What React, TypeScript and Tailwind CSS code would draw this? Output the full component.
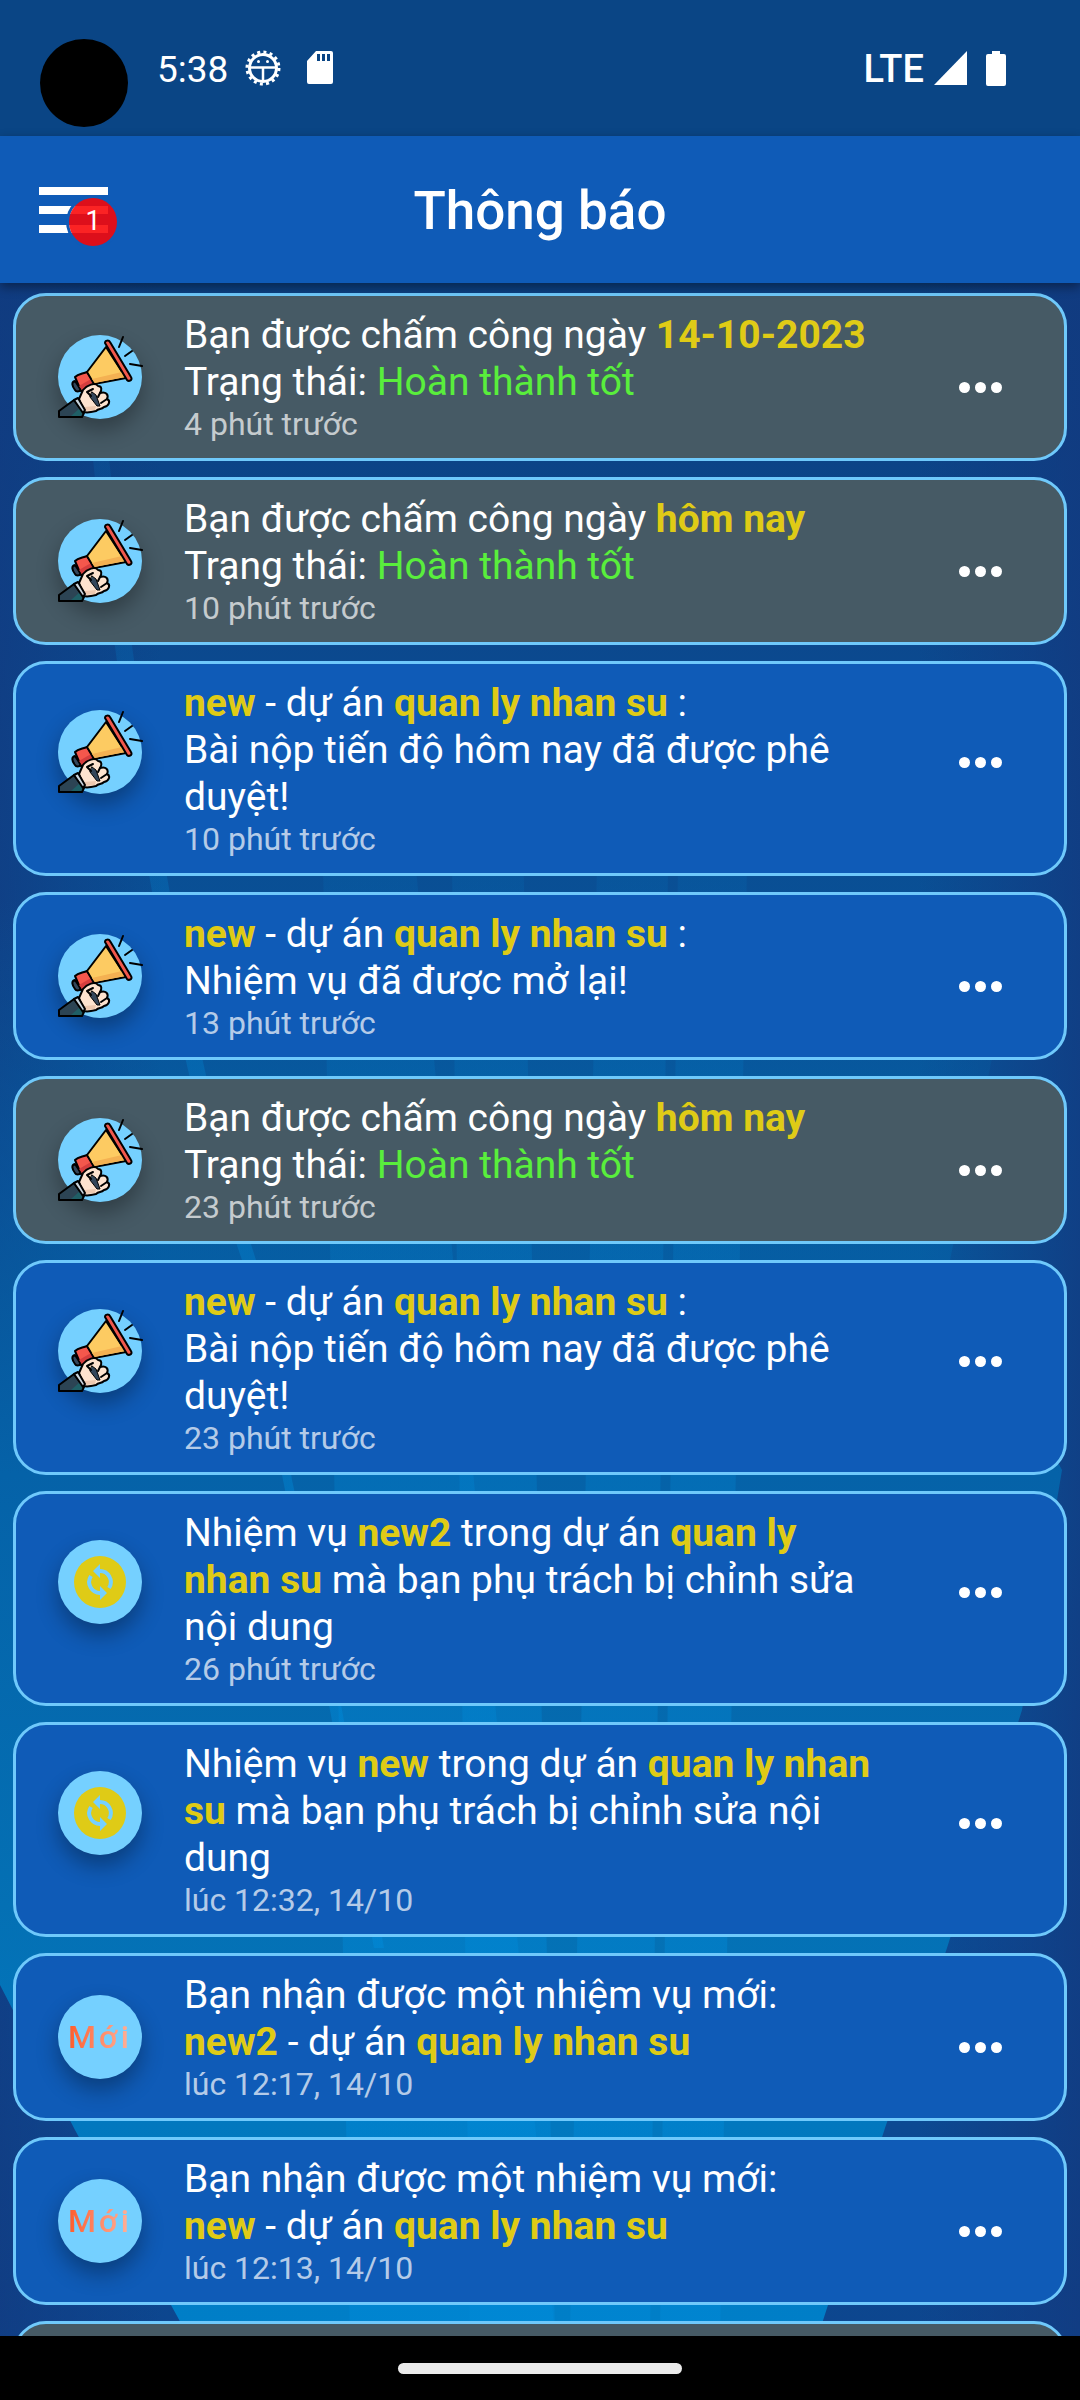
import React from "react";

const Y = ({ children }: { children: React.ReactNode }) => (
  <strong className="font-bold text-[#dfcb16]">{children}</strong>
);

type Kind = "horn" | "sync" | "new";
type Item = { kind: Kind; read?: boolean; tall?: boolean; body: React.ReactNode; time: string };

const attendance = (day: string) => (
  <>
    Bạn được chấm công ngày <Y>{day}</Y>
    <br />
    Trạng thái: <span className="text-[#59ee3c]">Hoàn thành tốt</span>
  </>
);
const project = (text: string) => (
  <>
    <Y>new</Y> - dự án <Y>quan ly nhan su</Y> :<br />
    {text}
  </>
);
const edited = (task: string) => (
  <>
    Nhiệm vụ <Y>{task}</Y> trong dự án <Y>quan ly nhan su</Y> mà bạn phụ trách bị chỉnh sửa nội dung
  </>
);
const received = (task: string) => (
  <>
    Bạn nhận được một nhiệm vụ mới:
    <br />
    <Y>{task}</Y> - dự án <Y>quan ly nhan su</Y>
  </>
);

const items: Item[] = [
  { kind: "horn", read: true, body: attendance("14-10-2023"), time: "4 phút trước" },
  { kind: "horn", read: true, body: attendance("hôm nay"), time: "10 phút trước" },
  { kind: "horn", tall: true, body: project("Bài nộp tiến độ hôm nay đã được phê duyệt!"), time: "10 phút trước" },
  { kind: "horn", body: project("Nhiệm vụ đã được mở lại!"), time: "13 phút trước" },
  { kind: "horn", read: true, body: attendance("hôm nay"), time: "23 phút trước" },
  { kind: "horn", tall: true, body: project("Bài nộp tiến độ hôm nay đã được phê duyệt!"), time: "23 phút trước" },
  { kind: "sync", tall: true, body: edited("new2"), time: "26 phút trước" },
  { kind: "sync", tall: true, body: edited("new"), time: "lúc 12:32, 14/10" },
  { kind: "new", body: received("new2"), time: "lúc 12:17, 14/10" },
  { kind: "new", body: received("new"), time: "lúc 12:13, 14/10" },
  { kind: "horn", read: true, body: attendance("hôm nay"), time: "lúc 11:50, 14/10" },
];

function Horn() {
  return (
    <svg viewBox="0 0 84 84" className="size-[84px] shrink-0 overflow-visible" aria-hidden="true">
      <g stroke="#000" strokeWidth="2" strokeLinejoin="round" strokeLinecap="round">
        <path d="M1 76 L16 65 L26 78 L24 82 L1 82 Z" fill="#2c4454" />
        <path d="M13 81 L22 73 L25 78 L23 81 Z" fill="#1f5f66" stroke="none" />
        <path d="M17 46 C13 47 14 51 17 55 C18 57 21 57 23 55 Z" fill="#33465a" />
        <path d="M17 42 C20 39 24 39 29 37 L37 49 C32 51 29 56 23 56 Z" fill="#f4574c" />
        <path d="M21 51 L33 44 L36 49 L24 55 Z" fill="#d53e3e" stroke="none" />
        <path d="M29 37 L48 12 L68 43 L36 49 Z" fill="#fdcb62" />
        <path d="M34 44 L64 37 L67 42 L37 48 Z" fill="#f4b152" stroke="none" />
        <path d="M47 8 C47 5 51 5 52 7 L73 42 C75 45 71 47 69 45 Z" fill="#f1584c" />
        <path d="M65 2 L61 12 M74 16 L67 21 M72 29 L84 31" fill="none" />
        <path d="M21 64 L25 55 C29 50 37 47 40 51 C44 51 44 55 42 58 C48 56 51 60 49 64 C53 66 51 71 46 72 C43 75 41 73 38 76 C34 77 29 78 26 77 Z" fill="#fde3cf" />
        <path d="M26 72 L38 71 L37 75 L27 76 Z" fill="#edc9b0" stroke="none" />
        <path d="M34 57 L38 60 L42 71 L39 71 L32 62 Z" fill="#33465a" strokeWidth="1" />
        <path d="M33 61 L29 57 L35 54 M40 62 L42 58 M43 68 L49 64" fill="none" />
        <path d="M16 65 L20 63 L27 75 L25 78 Z" fill="#c9d6df" />
      </g>
    </svg>
  );
}

function Sync() {
  return (
    <svg viewBox="0 0 52 52" className="size-[52px]" aria-hidden="true">
      <circle cx="26" cy="26" r="26" fill="#dfcb16" />
      <g fill="none" stroke="#75d0ff" strokeWidth="4">
        <path d="M25 15 A11 11 0 0 1 35 32" />
        <path d="M27 37 A11 11 0 0 1 17 20" />
      </g>
      <path d="M26 8 V22 L19 15 Z M26 44 V30 L33 37 Z" fill="#75d0ff" />
    </svg>
  );
}

function Avatar({ kind }: { kind: Kind }) {
  return (
    <div className="flex size-[84px] shrink-0 items-center justify-center rounded-full bg-[#75d0ff] shadow-[0_11px_22px_rgba(0,0,0,0.32)]">
      {kind === "horn" && <Horn />}
      {kind === "sync" && <Sync />}
      {kind === "new" && (
        <span className="bg-linear-to-r from-[#ff5a26] to-[#ffb39c] bg-clip-text text-[32px] leading-none font-medium tracking-widest text-transparent">
          Mới
        </span>
      )}
    </div>
  );
}

function Card({ item }: { item: Item }) {
  return (
    <li
      className={
        "flex items-start rounded-[33px] border-[3px] border-[#6fc9fb] pt-4 pr-[62px] pb-[15px] pl-[42px] " +
        (item.read ? "bg-[#465a65]" : "bg-[#0f5bb7]")
      }
    >
      <div className={item.tall ? "pt-[30px]" : "pt-[23px]"}>
        <Avatar kind={item.kind} />
      </div>
      <div className="ml-[42px] min-w-0 flex-1">
        <p className="text-[39px] leading-[47px] text-white">{item.body}</p>
        <p className="text-[32px] leading-[37px] text-white/70">{item.time}</p>
      </div>
      <button
        type="button"
        aria-label="Tùy chọn"
        className={"ml-[73px] flex gap-[5px] " + (item.tall ? "pt-[77px]" : "pt-[70px]")}
      >
        <i className="size-[11px] rounded-full bg-white" />
        <i className="size-[11px] rounded-full bg-white" />
        <i className="size-[11px] rounded-full bg-white" />
      </button>
    </li>
  );
}

function Gear() {
  return (
    <svg viewBox="0 0 36 38" className="h-[38px] w-9" aria-hidden="true">
      <circle cx="18" cy="19" r="16" fill="none" stroke="#fff" strokeWidth="3" strokeDasharray="3 3.28" />
      <circle cx="18" cy="19" r="13.500" fill="none" stroke="#fff" strokeWidth="3" />
      <path d="M5 18.500 H31 M18 19 V32" stroke="#fff" strokeWidth="2.500" />
      <circle cx="13.500" cy="12.500" r="1.500" fill="#fff" />
      <circle cx="22.500" cy="12.500" r="1.500" fill="#fff" />
    </svg>
  );
}

function Backdrop() {
  return (
    <svg
      viewBox="0 283 1080 2053"
      preserveAspectRatio="none"
      className="absolute inset-0 size-full"
      aria-hidden="true"
    >
      <defs>
        <linearGradient id="base" x1="0" y1="0" x2="0" y2="1">
          <stop offset="0" stopColor="#0c3f80" />
          <stop offset="0.2" stopColor="#0b4a90" />
          <stop offset="0.4" stopColor="#08559a" />
          <stop offset="0.6" stopColor="#075a9f" />
          <stop offset="0.8" stopColor="#0b4d96" />
          <stop offset="1" stopColor="#0d468e" />
        </linearGradient>
        <linearGradient id="glow" gradientUnits="userSpaceOnUse" x1="0" y1="900" x2="0" y2="2336">
          <stop offset="0" stopColor="#0560a6" stopOpacity="0" />
          <stop offset="0.4" stopColor="#0562a8" />
          <stop offset="0.7" stopColor="#0470b4" />
          <stop offset="1" stopColor="#007fc8" />
        </linearGradient>
        <linearGradient id="edge">
          <stop offset="0" stopColor="#123a80" stopOpacity="0.7" />
          <stop offset="0.15" stopColor="#123a80" stopOpacity="0" />
          <stop offset="0.85" stopColor="#123a80" stopOpacity="0" />
          <stop offset="1" stopColor="#123a80" stopOpacity="0.8" />
        </linearGradient>
        <linearGradient id="ray" gradientUnits="userSpaceOnUse" x1="0" y1="500" x2="0" y2="2300">
          <stop offset="0" stopColor="#008ad8" stopOpacity="0" />
          <stop offset="1" stopColor="#008ad8" stopOpacity="0.5" />
        </linearGradient>
        <linearGradient id="streak" gradientUnits="userSpaceOnUse" x1="0" y1="400" x2="0" y2="2300">
          <stop offset="0" stopColor="#008ad8" stopOpacity="0.12" />
          <stop offset="1" stopColor="#008ad8" stopOpacity="0.6" />
        </linearGradient>
      </defs>
      <rect y="283" width="1080" height="2053" fill="url(#base)" />
      <rect y="283" width="1080" height="2053" fill="url(#edge)" />
      <path
        d="M0 900 H1025 L950 1260 L1062 1470 L1022 1710 L947 1948 L885 2128 L818 2336 H188 L75 2130 L0 1985 Z"
        fill="url(#glow)"
      />
      <path d="M92 450 L108 450 Q170 1000 256 1260 L292 1480 L342 1710 L384 1948 H374 L330 1710 L283 1480 L242 1260 Q150 1000 92 450 Z" fill="url(#streak)" />
      <g fill="url(#ray)">
        <path d="M320 700 H400 L555 2336 H350 Z" />
        <path d="M450 700 H520 L555 2336 H470 Z" />
        <path d="M600 700 H670 L650 2336 H570 Z" />
        <path d="M680 700 H750 L720 2336 H660 Z" />
      </g>
    </svg>
  );
}

export default function App() {
  return (
    <div className="flex h-screen flex-col overflow-hidden bg-[#0b4686] font-[Roboto,sans-serif] text-white">
      <div className="flex h-[136px] shrink-0 items-center bg-[#0a4585] pr-[74px] pl-10">
        <div className="mt-[30px] size-[88px] rounded-full bg-black" />
        <span className="ml-[29px] pt-[2px] text-[37px] leading-none">5:38</span>
        <span className="ml-[17px]"><Gear /></span>
        <svg viewBox="0 0 26 34" className="ml-[26px] h-[34px] w-[26px]" aria-hidden="true">
          <path fillRule="evenodd" fill="#fff" d="M9 0 H24 Q26 0 26 2 V31 Q26 33 24 33 H2 Q0 33 0 31 V10 Z M10 3 V10 H13 V3 Z M15 3 V10 H18 V3 Z M20 3 V10 H23 V3 Z" />
        </svg>
        <span className="ml-auto pt-[2px] text-[38px] leading-none font-medium">LTE</span>
        <svg viewBox="0 0 33 34" className="ml-[10px] h-[34px] w-[33px]" aria-hidden="true">
          <path d="M33 0 V34 H0 Z" fill="#fff" />
        </svg>
        <svg viewBox="0 0 20 35" className="ml-[19px] h-[35px] w-5" aria-hidden="true">
          <path d="M6 0 H14 V3 H18 Q20 3 20 5 V33 Q20 35 18 35 H2 Q0 35 0 33 V5 Q0 3 2 3 H6 Z" fill="#fff" />
        </svg>
      </div>
      <header className="relative z-10 flex h-[147px] shrink-0 items-center justify-center bg-[#0f5bb7] shadow-[0_4px_10px_rgba(0,0,0,0.4)]">
        <button type="button" aria-label="Menu" className="absolute left-[39px] flex w-[69px] flex-col gap-[11px]">
          <i className="h-2 bg-white" />
          <i className="h-2 bg-white" />
          <i className="h-2 bg-white" />
          <span className="absolute top-[11px] left-[30px] flex size-12 items-center justify-center rounded-full bg-[#fa0406]/88 text-[27px] leading-none ring-3 ring-[#0f5bb7]">
            1
          </span>
        </button>
        <h1 className="pt-1 text-[53px] leading-none font-medium">Thông báo</h1>
      </header>
      <main className="relative flex min-h-0 flex-1 flex-col overflow-hidden">
        <Backdrop />
        <ul className="relative flex min-h-0 flex-1 flex-col gap-4 overflow-y-auto px-[13px] pt-[10px] [scrollbar-width:none] *:shrink-0">
          {items.map((item, i) => (
            <Card key={i} item={item} />
          ))}
        </ul>
      </main>
      <footer className="flex h-16 shrink-0 items-center justify-center bg-black">
        <div className="h-[11px] w-[284px] rounded-full bg-[#ebebeb]" />
      </footer>
    </div>
  );
}
